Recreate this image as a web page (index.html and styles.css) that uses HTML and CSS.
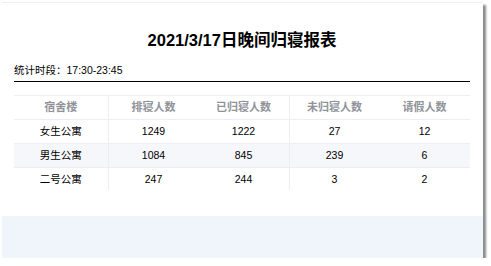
FILE: index.html
```html
<!DOCTYPE html>
<html lang="zh-CN">
<head>
<meta charset="utf-8">
<title>2021/3/17日晚间归寝报表</title>
<link rel="stylesheet" href="styles.css">
</head>
<body>
<div class="window">
  <div class="card">
    <h1 class="title">2021/3/17日晚间归寝报表</h1>
    <div class="period">统计时段：17:30-23:45</div>
    <div class="table-wrap">
      <table class="report">
        <colgroup>
          <col class="c1"><col class="c"><col class="c"><col class="c"><col class="c">
        </colgroup>
        <thead>
          <tr>
            <th class="sep">宿舍楼</th>
            <th>排寝人数</th>
            <th class="sep">已归寝人数</th>
            <th>未归寝人数</th>
            <th class="sep">请假人数</th>
          </tr>
        </thead>
        <tbody>
          <tr>
            <td class="sep">女生公寓</td><td>1249</td><td class="sep">1222</td><td>27</td><td class="sep">12</td>
          </tr>
          <tr class="stripe">
            <td class="sep">男生公寓</td><td>1084</td><td class="sep">845</td><td>239</td><td class="sep">6</td>
          </tr>
          <tr>
            <td class="sep">二号公寓</td><td>247</td><td class="sep">244</td><td>3</td><td class="sep">2</td>
          </tr>
        </tbody>
      </table>
    </div>
  </div>
  <div class="footer"></div>
</div>
</body>
</html>
```
FILE: styles.css
```css
html, body {
  margin: 0;
  padding: 0;
  background: #ffffff;
}

body {
  font-family: "Liberation Sans", "Noto Sans CJK SC", sans-serif;
  color: #000;
}

.window {
  margin: 2px 0 0 2px;
  width: 481px;
  height: 256px;
  display: flex;
  flex-direction: column;
  box-shadow: 3px 3px 2px #8c8c8c;
}

.card {
  flex: 1;
  background: #fff;
  border-top: 1px solid #eceff7;
  padding: 0 13px 0 12px;
}

.title {
  margin: 25px 0 0;
  font-size: 16.5px;
  line-height: 24px;
  font-weight: bold;
  text-align: center;
}

.period {
  margin-top: 10px;
  font-size: 10.5px;
  line-height: 16px;
  padding-bottom: 3px;
  border-bottom: 1px solid #000;
}

.table-wrap {
  margin-top: 13px;
  height: 95px;
  overflow: hidden;
}

.report {
  width: 456px;
  border-collapse: collapse;
  table-layout: fixed;
  border-top: 1px solid #ebeef5;
  font-size: 10.5px;
}

.report col.c1 { width: 94px; }
.report col.c { width: 90.5px; }

.report th,
.report td {
  height: 23px;
  padding: 0;
  text-align: center;
  border-bottom: 1px solid #ebeef5;
  line-height: 23px;
}

.report th {
  color: #909399;
  font-weight: bold;
  font-size: 11px;
}

.report .sep {
  border-right: 1px solid #ebeef5;
}

.report .stripe td {
  background: #f5f7fa;
}

.footer {
  height: 42px;
  background: #f0f4fb;
}
```
